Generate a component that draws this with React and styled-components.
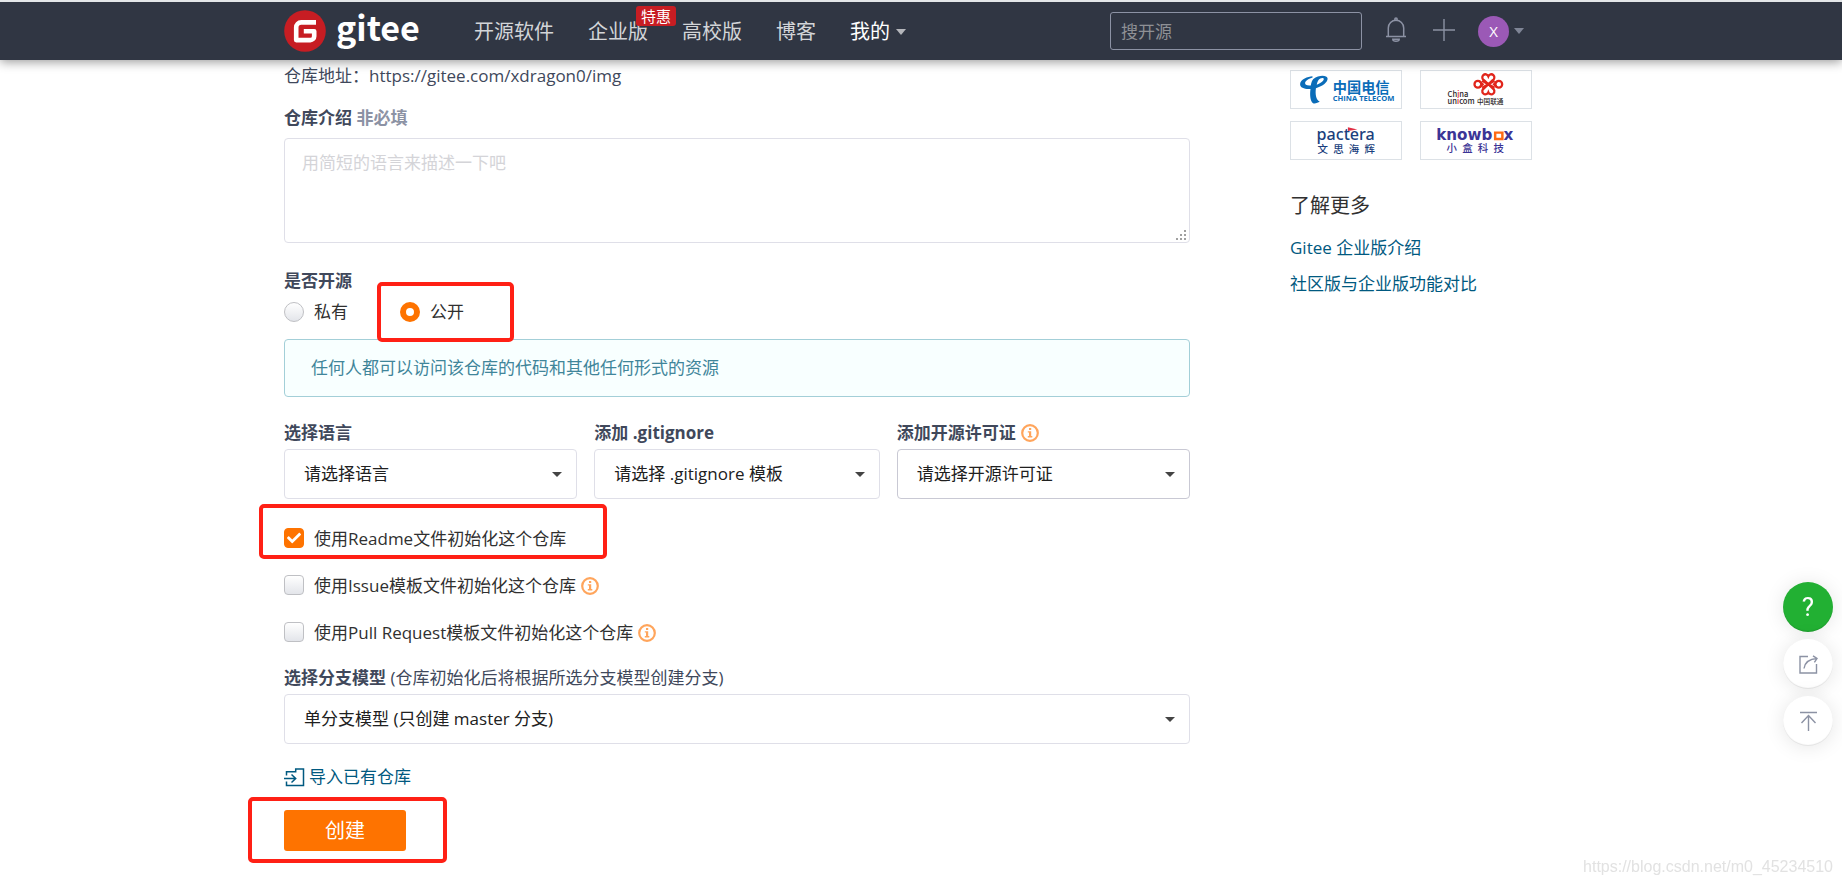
import React from "react";
import styled, { createGlobalStyle, css } from "styled-components";
import { FaCheck } from "react-icons/fa";

const CHECKS = [
  { id: "readme", text: "使用Readme文件初始化这个仓库", checked: true, marked: true },
  { id: "issue", text: "使用Issue模板文件初始化这个仓库", info: true },
  { id: "pull", text: "使用Pull Request模板文件初始化这个仓库", info: true },
];

const InfoIcon = () => (
  <Info viewBox="0 0 18 18" aria-hidden="true">
    <circle cx="9" cy="9" r="7.8" fill="none" stroke="#ffa55c" strokeWidth="2.2" />
    <path d="M8 4h2.2v2H8zM6.8 7.2h3.4v4.9h1.1v1.3H6.8v-1.3H8V8.5H6.8z" fill="#ffa55c" />
  </Info>
);

const Dropdown = ({ id, text, strong }) => (
  <SelectBox>
    <Select id={id} $strong={strong}>
      <option>{text}</option>
    </Select>
    <SelectCaret />
  </SelectBox>
);

const Header = () => (
  <Bar>
    <BarInner>
      <Brand href="#">
        <BrandMark viewBox="0 0 42 42" aria-hidden="true">
          <circle cx="21" cy="21" r="20.8" fill="#c71d23" />
          <path
            d="M32 12.4H17.2a5 5 0 0 0-5 5v12.7h14.2a3.8 3.8 0 0 0 3.8-3.8v-5H19.8"
            fill="none"
            stroke="#fff"
            strokeWidth="4.6"
            strokeLinejoin="round"
          />
        </BrandMark>
        <BrandName>gitee</BrandName>
      </Brand>
      <Nav>
        <NavLink href="#">开源软件</NavLink>
        <NavLink href="#">
          企业版
          <Badge>特惠</Badge>
        </NavLink>
        <NavLink href="#">高校版</NavLink>
        <NavLink href="#">博客</NavLink>
        <NavLink href="#" $active>
          我的
          <Caret $color="#b4b6bb" />
        </NavLink>
      </Nav>
      <Tools>
        <Search type="search" placeholder="搜开源" aria-label="搜开源" />
        <IconButton aria-label="通知">
          <svg width="22" height="26" viewBox="0 0 22 26" fill="none" stroke="#8c92a4" strokeWidth="1.5">
            <path d="M1 19.5h20M3.3 19V11a7.7 7.7 0 0 1 15.4 0v8M7.8 22.3h6.4a3.2 2 0 0 1-6.4 0z" />
            <circle cx="11" cy="2.2" r="1.2" />
          </svg>
        </IconButton>
        <IconButton aria-label="新建">
          <svg width="22" height="22" viewBox="0 0 22 22" stroke="#8c92a4" strokeWidth="1.4">
            <path d="M11 0v22M0 11h22" />
          </svg>
        </IconButton>
        <UserButton>
          <Avatar>X</Avatar>
          <Caret $color="#7f8596" />
        </UserButton>
      </Tools>
    </BarInner>
  </Bar>
);

const RepoForm = () => (
  <Form onSubmit={(e) => e.preventDefault()}>
    <Address>仓库地址：https://gitee.com/xdragon0/img</Address>
    <IntroLabel htmlFor="intro">
      仓库介绍 <Optional>非必填</Optional>
    </IntroLabel>
    <IntroBox>
      <Intro id="intro" placeholder="用简短的语言来描述一下吧" />
      <Grip viewBox="0 0 11 11" fill="#a0a0a0" aria-hidden="true">
        <path d="M8 0h2v2H8zM8 4h2v2H8zM8 8h2v2H8zM4 4h2v2H4zM4 8h2v2H4zM0 8h2v2H0z" />
      </Grip>
    </IntroBox>

    <RadioGroup>
      <Legend>是否开源</Legend>
      <RadioRow>
        <Choice>
          <Radio type="radio" name="visibility" />
          私有
        </Choice>
        <PublicChoice>
          <Radio type="radio" name="visibility" defaultChecked />
          公开
        </PublicChoice>
      </RadioRow>
    </RadioGroup>
    <Notice>任何人都可以访问该仓库的代码和其他任何形式的资源</Notice>

    <Templates>
      <Field>
        <Label htmlFor="language">选择语言</Label>
        <Dropdown id="language" text="请选择语言" />
      </Field>
      <Field>
        <Label htmlFor="ignore">添加 .gitignore</Label>
        <Dropdown id="ignore" text="请选择 .gitignore 模板" />
      </Field>
      <Field>
        <Label htmlFor="license">
          添加开源许可证
          <InfoIcon />
        </Label>
        <Dropdown id="license" text="请选择开源许可证" strong />
      </Field>
    </Templates>

    <CheckList>
      {CHECKS.map((item) => (
        <CheckRow key={item.id} $marked={item.marked}>
          <Tick>
            <Checkbox type="checkbox" id={item.id} defaultChecked={item.checked} />
            <FaCheck />
          </Tick>
          <label htmlFor={item.id}>{item.text}</label>
          {item.info && <InfoIcon />}
        </CheckRow>
      ))}
    </CheckList>

    <Field>
      <Label htmlFor="branch">
        选择分支模型&nbsp;<Hint>(仓库初始化后将根据所选分支模型创建分支)</Hint>
      </Label>
      <Dropdown id="branch" text="单分支模型 (只创建 master 分支)" />
    </Field>

    <ImportLink href="#">
      <svg width="21" height="19" viewBox="0 0 21 19" fill="none" stroke="currentColor" strokeWidth="1.5" aria-hidden="true">
        <path d="M2.5 7.5V3.8h9.2V1h7.8v16.5h-17v-4M0 10.5h11.5M7.5 6.5l4.2 4-4.2 4" />
      </svg>
      导入已有仓库
    </ImportLink>
    <SubmitRow>
      <Submit type="submit">创建</Submit>
    </SubmitRow>
  </Form>
);

const TelecomLogo = () => (
  <Logo viewBox="0 0 112 39" fill="#0a6cb8">
    <path d="M20.6 5.6c-4.8.3-12.6 3.2-13 8.2-.2 4.3 5.2 5.6 11 5.200-.8 5.200-.6 12.5 2.7 15 1.8.6 5.4-.3 7-1.8-4.200-1.9-4.8-8.6-4-14 7.200-2.100 12.6-6.400 12.3-10.200C36.2 4.2 27.4 4 21.6 8.400c-1.500 1.300-2.200 4-2.700 6.800-4.100.3-6.300-.4-6-2.800.3-2.300 4.200-4.700 7.900-5.600zM25.2 14.5c.7-4.300 3.200-7.300 6.200-7 3 .6.200 4.800-6.200 7z" />
    <text x="42" y="23" fontSize="15" fontWeight="700">中国电信</text>
    <text x="42" y="32" fontSize="8" fontWeight="700" fontFamily="Open Sans, sans-serif">CHINA TELECOM</text>
  </Logo>
);

const UnicomLogo = () => (
  <Logo viewBox="0 0 112 39" fill="#2b2627">
    <g transform="translate(69 14)" fill="none" stroke="#e1251b" strokeWidth="2.4">
      <path d="M0 0l-4.500-4.300a3.300 3.300 0 1 1 4.500-4.200 3.300 3.300 0 1 1 4.500 4.200z" />
      <path d="M0 0l-4.500 4.300a3.300 3.300 0 1 0 4.500 4.200 3.300 3.300 0 1 0 4.500-4.200z" />
      <path d="M0 0l-6.500-3.600M0 0l-6.500 3.600M0 0l6.500-3.600M0 0l6.500 3.600" />
      <circle cx="-11" cy="0" r="3.600" />
      <circle cx="11" cy="0" r="3.600" />
      <path d="M-9-3l3 3-3 3M9-3L6 0l3 3" />
    </g>
    <text x="26" y="27" fontSize="8" fontWeight="500">Ch<tspan fill="#e1251b">i</tspan>na</text>
    <text x="26" y="35" fontSize="8" fontWeight="500">un<tspan fill="#e1251b">i</tspan>com</text>
    <text x="57" y="35" fontSize="7" fontWeight="500">中国联通</text>
  </Logo>
);

const PacteraLogo = () => (
  <Logo viewBox="0 0 112 39" fill="#1b3f7d">
    <text x="25" y="19" fontSize="17" fontWeight="500" fontFamily="Noto Sans, sans-serif">pactera</text>
    <path d="M58 5.5l10 2.3-10 1.8z" fill="#e02f45" />
    <text x="26" y="33" fontSize="11" fontWeight="500">文&#8194;思&#8194;海&#8194;辉</text>
  </Logo>
);

const KnowboxLogo = () => (
  <Logo viewBox="0 0 112 39" fill="#3c3596">
    <text x="14" y="19" fontSize="16" fontWeight="700" fontFamily="DejaVu Sans, sans-serif">knowb</text>
    <path d="M76.200 11.200h7.600v6.800h-7.600z" fill="none" stroke="#ff6a13" strokeWidth="2.600" />
    <text x="85" y="19" fontSize="16" fontWeight="700" fontFamily="DejaVu Sans, sans-serif">x</text>
    <text x="25" y="32" fontSize="11" fontWeight="500">小&#8194;盒&#8194;科&#8194;技</text>
  </Logo>
);

const Sidebar = () => (
  <Aside>
    <Logos>
      <Partner href="#" aria-label="中国电信"><TelecomLogo /></Partner>
      <Partner href="#" aria-label="中国联通"><UnicomLogo /></Partner>
      <Partner href="#" aria-label="文思海辉"><PacteraLogo /></Partner>
      <Partner href="#" aria-label="小盒科技"><KnowboxLogo /></Partner>
    </Logos>
    <MoreTitle>了解更多</MoreTitle>
    <MoreLink href="#">Gitee 企业版介绍</MoreLink>
    <MoreLink href="#">社区版与企业版功能对比</MoreLink>
  </Aside>
);

const App = () => (
  <>
    <GlobalStyle />
    <Header />
    <Main>
      <RepoForm />
      <Sidebar />
    </Main>
    <FloatBar>
      <FloatButton $green aria-label="帮助">?</FloatButton>
      <FloatButton aria-label="分享">
        <svg width="19" height="19" viewBox="0 0 19 19" fill="none" stroke="#8c92a4" strokeWidth="1.4">
          <path d="M9 1.5H1V18h16.500V9M5 13.5C5.800 8 9.500 4 18 3.500M14 .8l4 2.700-2.600 3.800" />
        </svg>
      </FloatButton>
      <FloatButton aria-label="返回顶部">
        <svg width="17" height="20" viewBox="0 0 17 20" fill="none" stroke="#8c92a4" strokeWidth="1.4">
          <path d="M0 1.500h17M8.500 4.500V20M1.500 12l7-7.500 7 7.500" />
        </svg>
      </FloatButton>
    </FloatBar>
    <Watermark>https://blog.csdn.net/m0_45234510</Watermark>
  </>
);
export default App;

const GlobalStyle = createGlobalStyle`
  * {
    box-sizing: border-box;
  }
  body {
    margin: 0;
    background: #fff;
    color: #303030;
    font-family: "Open Sans", "Noto Sans CJK SC", sans-serif;
    font-size: 17px;
    line-height: 24px;
  }
  button, input, select, textarea {
    font: inherit;
    margin: 0;
  }
  a {
    text-decoration: none;
  }
`;

// red frame drawn over the parts the reader has to fill in
const frame = css`
  position: relative;

  &::after {
    content: "";
    position: absolute;
    border: 4px solid #ff2015;
    border-radius: 5px;
    pointer-events: none;
  }
`;

const Bar = styled.header`
  position: sticky;
  top: 0;
  z-index: 2;
  background: #303643;
  border-top: 2px solid #e3e6e8;
  box-shadow: 0 2px 10px rgba(0, 0, 0, 0.4);
`;
const BarInner = styled.div`
  max-width: 1274px;
  height: 58px;
  margin: 0 auto;
  display: flex;
  align-items: center;
`;
const Brand = styled.a`
  display: flex;
  align-items: center;
  gap: 10px;
  width: 190px;
  color: #fff;
`;
const BrandMark = styled.svg`
  width: 42px;
  height: 42px;
`;
const BrandName = styled.span`
  padding-bottom: 8px;
  font-family: "Noto Sans CJK SC", sans-serif;
  font-size: 34px;
  line-height: 44px;
  font-weight: 700;
`;
const Nav = styled.nav`
  display: flex;
  gap: 34px;
  padding-top: 2px;
`;
const NavLink = styled.a`
  position: relative;
  display: flex;
  align-items: center;
  gap: 6px;
  font-size: 20px;
  color: ${(props) => (props.$active ? "#fff" : "#d3d5d8")};
`;
const Badge = styled.span`
  position: absolute;
  left: 48px;
  top: -14px;
  padding: 0 5px;
  border-radius: 3px;
  background: #c71d23;
  color: #fff;
  font-size: 15px;
  line-height: 20px;
  white-space: nowrap;
`;
const Caret = styled.span`
  border: 5px solid transparent;
  border-top: 6px solid ${(props) => props.$color};
  border-bottom: 0;
`;
const Tools = styled.div`
  display: flex;
  align-items: center;
  gap: 23px;
  margin-left: auto;
  padding-right: 34px;
`;
const Search = styled.input`
  width: 252px;
  height: 38px;
  padding: 0 10px;
  border: 1px solid #8c92a4;
  border-radius: 3px;
  background: transparent;
  color: #fff;

  &::placeholder {
    color: #8e9095;
  }
`;
const IconButton = styled.button`
  display: flex;
  padding: 0 0 2px;
  border: 0;
  background: none;

  & + & {
    margin-left: 3px;
  }
`;
const UserButton = styled.button`
  display: flex;
  align-items: center;
  gap: 5px;
  padding: 0;
  border: 0;
  background: none;
`;
const Avatar = styled.span`
  width: 31px;
  height: 31px;
  border-radius: 50%;
  background: #9b59b6;
  color: #fff;
  font-size: 15px;
  line-height: 31px;
`;

const Main = styled.main`
  max-width: 1274px;
  margin: 0 auto;
  padding: 4px 0 34px;
  display: flex;
  gap: 100px;
`;
const Form = styled.form`
  flex: 1;
`;
const Address = styled.div`
  color: #40485b;
`;
const Label = styled.label`
  display: flex;
  align-items: center;
  color: #40485b;
  font-weight: 700;
`;
const IntroLabel = styled.label`
  display: block;
  margin: 18px 0 8px;
  color: #40485b;
  font-weight: 700;
`;
const Optional = styled.span`
  color: #8c92a4;
`;
const Hint = styled.span`
  font-weight: 400;
`;
const IntroBox = styled.div`
  position: relative;
  display: flex;
`;
const Intro = styled.textarea`
  width: 100%;
  height: 105px;
  padding: 12px 17px;
  border: 1px solid #dfdfe8;
  border-radius: 4px;
  resize: none;

  &::placeholder {
    color: #d4d4d8;
  }
`;
const Grip = styled.svg`
  position: absolute;
  right: 3px;
  bottom: 2px;
  width: 11px;
  height: 11px;
`;
const RadioGroup = styled.fieldset`
  margin: 26px 0 0;
  padding: 0;
  border: 0;
`;
const Legend = styled.legend`
  padding: 0;
  color: #40485b;
  font-weight: 700;
`;
const RadioRow = styled.div`
  display: flex;
  gap: 52px;
  padding-top: 7px;
`;
const Choice = styled.label`
  display: flex;
  align-items: center;
  gap: 10px;
`;
const PublicChoice = styled(Choice)`
  ${frame}

  &::after {
    inset: -18px -50px -18px -23px;
  }
`;
const Radio = styled.input`
  appearance: none;
  width: 20px;
  height: 20px;
  border: 1px solid #bfc0c4;
  border-radius: 50%;
  background: linear-gradient(#fff, #e3e5ea);

  &:checked {
    border: 6px solid #fe7300;
    background: #fff;
  }
`;
const Notice = styled.div`
  margin-top: 15px;
  padding: 16px 26px;
  border: 1px solid #a3cfd8;
  border-radius: 4px;
  background: #f8ffff;
  color: #40859a;
`;
const Templates = styled.div`
  display: grid;
  grid-template-columns: 293fr 285fr 293fr;
  gap: 17px;
  margin-top: 24px;
`;
const Field = styled.div`
  display: flex;
  flex-direction: column;
  gap: 4px;
`;
const SelectBox = styled.div`
  display: grid;
  align-items: center;
`;
const Select = styled.select`
  grid-area: 1 / 1;
  appearance: none;
  width: 100%;
  height: 50px;
  padding: 0 40px 0 19px;
  border: 1px solid ${(props) => (props.$strong ? "#c9c9d4" : "#dfdfe8")};
  border-radius: 4px;
  background: #fff;
  color: #202020;
`;
const SelectCaret = styled.span`
  grid-area: 1 / 1;
  justify-self: end;
  margin-right: 15px;
  border: 5px solid transparent;
  border-top-color: #444;
  border-bottom: 0;
  pointer-events: none;
`;
const Info = styled.svg`
  width: 18px;
  height: 18px;
  margin-left: 5px;
`;
const CheckList = styled.div`
  display: flex;
  flex-direction: column;
  gap: 23px;
  margin: 28px 0 21px;
`;
const CheckRow = styled.div`
  display: flex;
  align-items: center;
  ${(props) =>
    props.$marked &&
    css`
      ${frame}
      width: 298px;

      &::after {
        inset: -23px -25px -8px;
      }
    `}
`;
const Tick = styled.span`
  display: grid;
  place-items: center;
  margin-right: 10px;
  padding-bottom: 2px;

  svg {
    grid-area: 1 / 1;
    width: 14px;
    height: 14px;
    color: #fff;
    pointer-events: none;
  }

  input:not(:checked) + svg {
    visibility: hidden;
  }
`;
const Checkbox = styled.input`
  grid-area: 1 / 1;
  appearance: none;
  width: 20px;
  height: 20px;
  border: 1px solid #bfc0c4;
  border-radius: 4px;
  background: linear-gradient(#fff, #e3e5ea);

  &:checked {
    border-color: #fe7300;
    background: #fe7300;
  }
`;
const ImportLink = styled.a`
  display: flex;
  align-items: center;
  gap: 4px;
  width: fit-content;
  margin-top: 21px;
  color: #005980;
`;
const SubmitRow = styled.div`
  ${frame}
  width: 122px;
  margin-top: 21px;

  &::after {
    inset: -13px -41px -12px -36px;
  }
`;
const Submit = styled.button`
  display: block;
  width: 100%;
  height: 41px;
  border: 0;
  border-radius: 3px;
  background: #fe7300;
  color: #fff;
  font-size: 20px;
`;

const Aside = styled.aside`
  width: 268px;
  padding-top: 6px;
`;
const Logos = styled.div`
  display: grid;
  grid-template-columns: 112px 112px;
  gap: 12px 18px;
`;
const Partner = styled.a`
  display: flex;
  height: 39px;
  border: 1px solid #dce1e6;
`;
const Logo = styled.svg`
  width: 100%;
  height: 100%;
  font-family: "Noto Sans CJK SC", sans-serif;
`;
const MoreTitle = styled.h2`
  margin: 34px 0 18px;
  font-size: 20px;
  font-weight: 400;
  line-height: 24px;
`;
const MoreLink = styled.a`
  display: block;
  margin-bottom: 12px;
  color: #005980;
`;

const FloatBar = styled.div`
  position: fixed;
  right: 9px;
  bottom: 140px;
  display: flex;
  flex-direction: column;
  gap: 7px;
`;
const FloatButton = styled.button`
  width: 50px;
  height: 50px;
  display: flex;
  align-items: center;
  justify-content: center;
  padding: 0;
  border: 0;
  border-radius: 50%;
  background: ${(props) => (props.$green ? "#22b033" : "#fff")};
  color: #fff;
  font-family: Roboto, sans-serif;
  font-size: 26px;
  box-shadow: 0 1px 20px rgba(0, 0, 0, 0.1), inset 0 -1px 1px rgba(0, 0, 0, 0.12);
`;
const Watermark = styled.div`
  position: fixed;
  right: 9px;
  bottom: 8px;
  color: #e2e2e2;
  font-family: "Liberation Sans", sans-serif;
  font-size: 16px;
  line-height: 22px;
`;
